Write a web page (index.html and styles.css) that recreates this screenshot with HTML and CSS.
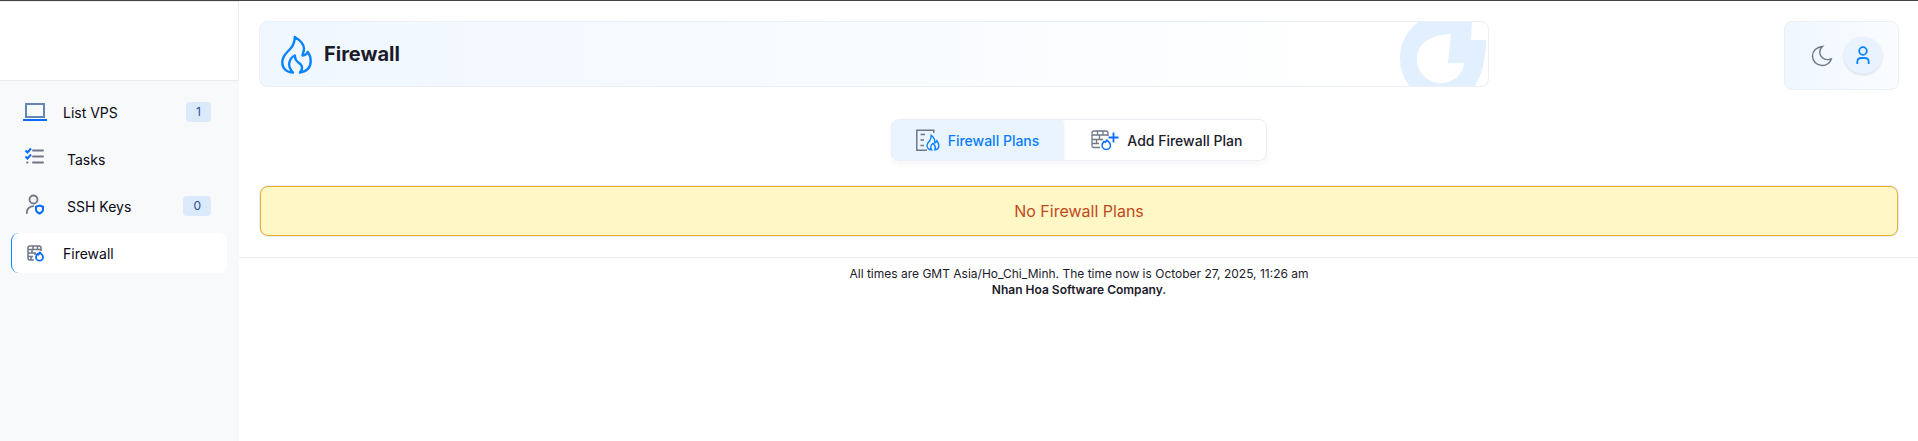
FILE: index.html
```html
<!DOCTYPE html>
<html lang="en">
<head>
    <meta charset="UTF-8">
    <meta name="viewport" content="width=device-width, initial-scale=1.0">
    <title>Firewall</title>

    <link rel="stylesheet" href="styles.css">
</head>
<body>

    <aside class="sidebar">
        <div class="sidebar-logo"></div>
        <nav class="menu">
            <a class="menu-link" href="#vps">
                <svg class="icon" viewBox="0 0 24 24">
                    <path class="line" d="M3 4h18v13H3z" stroke="#6486b5" stroke-width="2"/>
                    <path class="line accent" d="M0 20h24" stroke-width="2"/>
                </svg>
                List VPS
                <span class="badge">1</span>
            </a>
            <a class="menu-link menu-link-wide" href="#tasks">
                <svg class="icon" viewBox="0 0 24 24">
                    <path class="line gray" d="M10 3.500h10M10 9.500h10M10 15.500h10M4 15.500h.5" stroke-width="2" stroke-linecap="round"/>
                    <path class="line accent" d="M2.500 3.500l2 2 3.500-4M2.500 9.500l2 2 3.500-4" stroke-width="2"/>
                </svg>
                Tasks
            </a>
            <a class="menu-link menu-link-wide" href="#keys">
                <svg class="icon" viewBox="0 0 24 24">
                    <circle class="line gray" cx="10.500" cy="5.500" r="4" stroke-width="1.800"/>
                    <path class="line gray" d="M3.800 19c.2-4.500 2.500-6.500 6.500-6.800" stroke-width="1.800" stroke-linecap="round"/>
                    <path class="line accent" d="M16.500 11.500l3.500 1.200v2.800c0 1.800-1.300 3-3.500 4-2.200-1-3.500-2.200-3.500-4v-2.800z" stroke-width="2"/>
                </svg>
                SSH Keys
                <span class="badge">0</span>
            </a>
            <a class="menu-link menu-link-active" href="#firewall">
                <svg class="icon" viewBox="0 0 24 24">
                    <path class="line gray" d="M11 19H7q-2 0-2-2V7q0-2 2-2h9q2 0 2 2v3M5 8.500h13M10 5v3.500M14.500 5v3.500M5 12h8M9 8.500V12M5 15.500h5M12 12v2M8 15.500V19" stroke-width="1.500"/>
                    <path class="line accent" d="M16.500 10.800c.4 1.700 3.500 2.500 3.500 5.400a3.500 3.500 0 0 1-7 0c0-1.500.8-2.400 1.600-3.300l1 .7q1-1 .9-2.800z" stroke-width="1.800"/>
                </svg>
                Firewall
            </a>
        </nav>
    </aside>

    <div class="page">
        <header class="header">
            <div class="hero">
                <svg class="hero-icon" viewBox="0 0 31 39">
                    <path class="line flame" d="M12 37.500C5.500 37.500 1.300 33.500 1.300 27.500c0-4.500 2-7.500 5-10.500 4-4 7.500-7.500 7.500-15 5 3 9 7 9.200 11.500 0 3-1.200 4.500-1.500 7 2.500-.2 4.500-1.200 5.200-3.500 2 2.500 3 5.500 3 9 0 6.500-4.200 10.500-10.700 11.500 2-2.500 2.800-4.500 1.500-7-1-2-4-3-5.500-5.500-.8-1.500-1-3-1.200-4.500-3.300 1.500-5 4.500-5.600 7.500-.6 3.500 1 6.500 3.800 9.500z" stroke-width="2.400" stroke-linejoin="round"/>
                </svg>
                <h1 class="hero-title">Firewall</h1>
                <svg class="hero-mark" viewBox="0 0 90 66">
                    <path fill="#e2efff" fill-rule="evenodd" d="M22 0A43 43 0 0 0 2 37Q2 54 12 66H76C82 58 88 42 88 19H73L74 0ZM53 13C32 14 19 22 19 38C19 52 30 62 43 62C56 62 65 53 66 42H50Z"/>
                </svg>
            </div>
            <div class="actions">
                <button class="action" type="button" aria-label="Dark mode">
                    <svg class="icon" viewBox="0 0 24 24">
                        <path class="line gray" d="M12.500 2.500C6.500 3 2.500 7 2.500 12c0 5.500 4.300 9.500 9.500 9.500 4.500 0 8-2.500 9.300-6.500-6 2-11.500-1.500-11.500-7 0-2.200.9-4 2.700-5.500z" stroke-width="1.400"/>
                    </svg>
                </button>
                <button class="action action-user" type="button" aria-label="Account">
                    <svg class="icon" viewBox="0 0 24 24">
                        <circle class="line flame" cx="12" cy="7" r="3.800" stroke-width="1.800"/>
                        <path class="line flame" d="M6.300 20v-2c0-2.500 1.500-4 4-4h3.400c2.500 0 4 1.500 4 4v2" stroke-width="1.800"/>
                    </svg>
                </button>
            </div>
        </header>

        <main>
            <nav class="tabs">
                <a class="tab tab-active" href="#plans">
                    <svg class="icon" viewBox="4 0 24 24">
                        <path class="line gray" d="M15 22.300H4.800V2.300h17V5M8.500 6.500H13M8.500 12h3.500M8.500 17.500H12" stroke-width="1.500"/>
                        <path class="line flame" d="M19.500 21.800c-3 0-4.500-2-4.500-4.500 0-2 1.500-3 2.700-4.500 1-1.500 1.500-3 1.500-5.500 2.600 2 4.100 4 3.600 7.500 1.300-.3 1.800-1 2-2 1.200 1.500 2 3 2 4.500 0 2.500-1.500 4.500-4 4.500 1-2 .7-3.500-.5-4.800l-1.200-1.700c-1.500.8-2 2-2.200 3-.3 1.300-.2 2.500.6 3.500z" stroke-width="1.400"/>
                    </svg>
                    Firewall Plans
                </a>
                <a class="tab tab-add" href="#add">
                    <svg class="tab-icon" viewBox="0 0 28 24">
                        <path class="line gray" d="M9 19.500H3q-2 0-2-2V5q0-2 2-2h12q2 0 2 2v3M1 7h16M6.500 3v4M12 3v4M1 11.500h11M8.500 7v4.500M1 15.500h7M5.500 11.500v4" stroke-width="1.300"/>
                        <path class="line accent" d="M15.500 11.500c.4 1.800 4 2.600 4 5.700a4.200 4.200 0 0 1-8.400 0c0-1.700.9-2.800 1.900-3.800l1.500.9q1-1.100 1-2.800z" stroke-width="1.500"/>
                        <path class="line accent" d="M22.500 4.500v10M17.500 9.500h10" stroke-width="1.800"/>
                    </svg>
                    Add Firewall Plan
                </a>
            </nav>

            <div class="notice">No Firewall Plans</div>
        </main>

        <footer class="footer">
            <p>All times are GMT Asia/Ho_Chi_Minh. The time now is October 27, 2025, 11:26 am</p>
            <p class="company">Nhan Hoa Software Company.</p>
        </footer>
    </div>

</body>
</html>
```

FILE: styles.css
```css
* {
    padding: 0;
    margin: 0;
    box-sizing: border-box;
}

body {
    min-height: 100vh;
    display: flex;

    background-color: white;
    border-top: 1px solid #444;

    font-family: Inter, sans-serif;
    font-size: 14px;
    color: #1b1b2b;
}

a {
    color: inherit;
    text-decoration: none;
}

.line {
    fill: none;
}

.gray {
    stroke: #6f7789;
}

.accent {
    stroke: #0a6cff;
}

.flame {
    stroke: #0a84ff;
}

.icon {
    width: 24px;
    height: 24px;
    flex: none;
}

/* sidebar */

.sidebar {
    width: 239px;
    flex: none;

    background-color: #f8f9fb;
}

.sidebar-logo {
    height: 80px;

    background-color: white;
    border: solid #ebecee;
    border-width: 1px 1px 1px 0;
}

.menu {
    padding: 11px 12px 11px 11px;

    display: flex;
    flex-direction: column;
    gap: 7px;
}

.menu-link {
    height: 40px;
    padding: 0 16px 0 11px;

    display: flex;
    align-items: center;
    gap: 16px;

    border-left: 1px solid transparent;
    border-radius: 8px;

    color: #0a0a14;
}

.menu-link-wide {
    gap: 20px;
}

.menu-link-active {
    background-color: white;
    border-left-color: #0a84ff;
}

.badge {
    padding: 0 10px;
    margin-left: auto;

    background-color: #dbeafb;
    border-radius: 4px;

    font-size: 12px;
    line-height: 20px;
    text-align: center;
    color: #27519a;
}

/* page */

.page {
    flex: 1;
    min-width: 0;
}

.header {
    padding: 20px 19px 0 20px;

    display: flex;
    justify-content: space-between;
    align-items: flex-start;
}

.hero {
    width: 75%;
    height: 66px;
    padding-left: 21px;

    display: flex;
    align-items: center;
    gap: 12px;

    background: linear-gradient(to right, #f0f7ff, #fff 90%);
    border: 1px solid #eaf0f6;
    border-radius: 8px;
    overflow: hidden;
}

.hero-icon {
    width: 31px;
    height: 39px;
}

.hero-title {
    font-size: 20px;
    font-weight: 700;
    line-height: 24px;
}

.hero-mark {
    width: 90px;
    height: 66px;
    margin-left: auto;
}

.actions {
    padding: 15px 16px 15px 18px;

    display: flex;
    gap: 3px;

    background: linear-gradient(to right, #f0f7ff, #fafcff);
    border: 1px solid #eaf0f6;
    border-radius: 8px;
}

.action {
    width: 38px;
    height: 37px;

    display: flex;
    justify-content: center;
    align-items: center;

    background: none;
    border: none;
    border-radius: 50%;

    cursor: pointer;
}

.action-user {
    background-color: #e8f3ff;
    box-shadow: 0 1px 3px #0002;
}

main {
    padding: 29px 19px 21px 20px;
}

.tabs {
    width: fit-content;
    margin: 0 auto 25px;

    display: flex;

    border: 1px solid #eaeef4;
    border-radius: 8px;
    box-shadow: 0 3px 6px #0000000a;
    overflow: hidden;
}

.tab {
    height: 40px;
    padding: 0 24px;

    display: flex;
    align-items: center;
    gap: 8px;

    font-weight: 500;
}

.tab-add {
    padding-left: 28px;
}

.tab-active {
    background-color: #e9f4ff;
    box-shadow: 0 1px 3px #0002;
    color: #0a7cff;
}

.tab-icon {
    width: 28px;
    height: 24px;
}

.notice {
    margin: 0 1px;
    padding: 12px;

    background-color: #fff8c6;
    border: 1px solid #e8ae30;
    border-radius: 8px;
    box-shadow: 0 0 0 1px #eaeef4;

    font-size: 16px;
    line-height: 24px;
    text-align: center;
    color: #bf4a1c;
}

.footer {
    padding: 8px 19px 8px 20px;

    border-top: 1px solid #ebecee;

    font-size: 12px;
    line-height: 16px;
    text-align: center;
}

.company {
    font-weight: 600;
}
```
